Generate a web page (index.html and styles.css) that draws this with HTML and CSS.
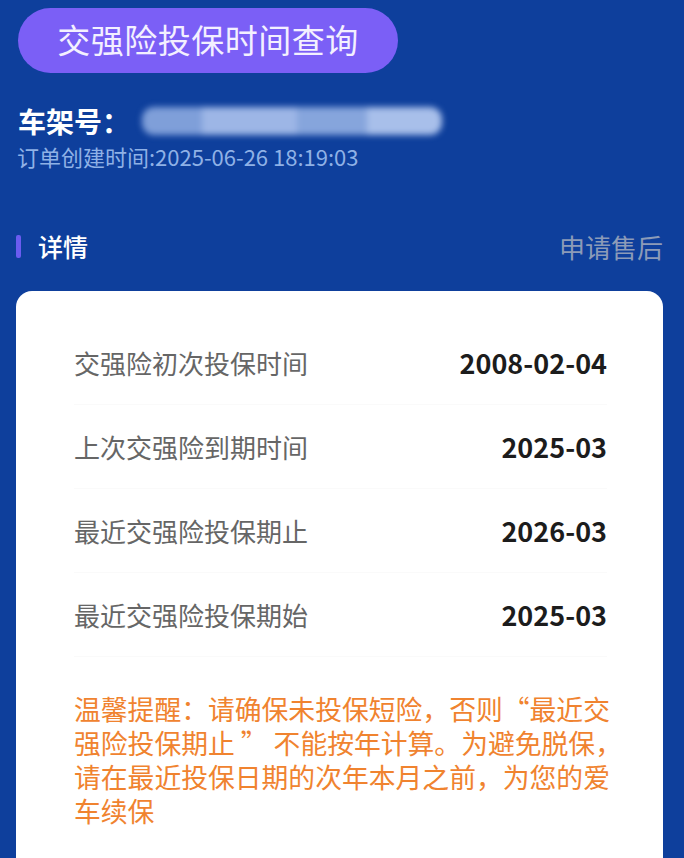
FILE: index.html
```html
<!DOCTYPE html>
<html lang="zh-CN">
<head>
<meta charset="utf-8">
<title>交强险投保时间查询</title>
<link rel="stylesheet" href="styles.css">
</head>
<body>
<div class="page">
  <div class="pill">交强险投保时间查询</div>
  <div class="vin-row">
    <span class="vin-label">车架号：</span>
    <span class="vin-blur"><span class="b1"></span><span class="b2"></span><span class="b3"></span><span class="b4"></span></span>
  </div>
  <div class="order-time">订单创建时间:2025-06-26 18:19:03</div>
  <div class="section-head">
    <div class="section-title"><span class="bar"></span>详情</div>
    <div class="after-sale">申请售后</div>
  </div>
  <div class="card">
    <div class="row"><span class="label">交强险初次投保时间</span><span class="value">2008-02-04</span></div>
    <div class="row"><span class="label">上次交强险到期时间</span><span class="value">2025-03</span></div>
    <div class="row"><span class="label">最近交强险投保期止</span><span class="value">2026-03</span></div>
    <div class="row"><span class="label">最近交强险投保期始</span><span class="value">2025-03</span></div>
    <p class="tip">温馨提醒：请确保未投保短险，否则“最近交强险投保期止 ” 不能按年计算。为避免脱保，请在最近投保日期的次年本月之前，为您的爱车续保</p>
  </div>
</div>
</body>
</html>
```
FILE: styles.css
```css
html, body {
  margin: 0;
  padding: 0;
  background: #0e3f9c;
  font-family: "Noto Sans CJK SC", "Noto Sans", sans-serif;
}
.page {
  width: 684px;
  height: 858px;
  overflow: hidden;
  padding-top: 8px;
  box-sizing: border-box;
}
.pill {
  margin-left: 18px;
  width: 380px;
  height: 65px;
  border-radius: 33px;
  background: #7b5ff6;
  color: #f3f0ff;
  font-size: 33px;
  line-height: 63px;
  text-align: center;
  letter-spacing: 0.5px;
}
.vin-row {
  margin-top: 32px;
  margin-left: 18px;
  display: flex;
  align-items: center;
  height: 32px;
}
.vin-label {
  color: #ffffff;
  font-weight: 700;
  font-size: 28px;
  line-height: 32px;
}
.vin-blur {
  display: flex;
  margin-left: 12px;
  width: 300px;
  height: 28px;
  filter: blur(3px);
  border-radius: 12px;
  overflow: hidden;
}
.vin-blur span { height: 100%; }
.vin-blur .b1 { width: 60px; background: #7f9fd9; }
.vin-blur .b2 { width: 95px; background: #9db6e6; }
.vin-blur .b3 { width: 70px; background: #86a5dc; }
.vin-blur .b4 { width: 75px; background: #a8bfea; }
.order-time {
  margin-top: 5px;
  margin-left: 17px;
  color: #8fb1e6;
  font-size: 22px;
  line-height: 28px;
}
.section-head {
  margin-top: 61px;
  margin-left: 16px;
  margin-right: 21px;
  display: flex;
  justify-content: space-between;
  align-items: center;
  height: 30px;
}
.section-title {
  display: flex;
  align-items: center;
  color: #ffffff;
  font-size: 25px;
  font-weight: 500;
}
.bar {
  width: 5px;
  height: 23px;
  background: #6b5cf0;
  border-radius: 2px;
  margin-right: 17px;
}
.after-sale {
  color: #8c9bb8;
  font-size: 26px;
}
.card {
  margin: 30px 21px 0 16px;
  background: #ffffff;
  border-radius: 16px;
  padding: 30px 56px 40px 58px;
  min-height: 600px;
}
.row {
  height: 84px;
  display: flex;
  justify-content: space-between;
  align-items: center;
  border-bottom: 1px solid #fafafa;
  box-sizing: border-box;
}
.label {
  color: #666666;
  font-size: 26px;
}
.value {
  color: #1c1c1c;
  font-size: 27px;
  font-weight: 700;
}
.tip {
  margin: 35px -25px 0 0;
  color: #f0832f;
  font-size: 26.8px;
  line-height: 34px;
}
```
